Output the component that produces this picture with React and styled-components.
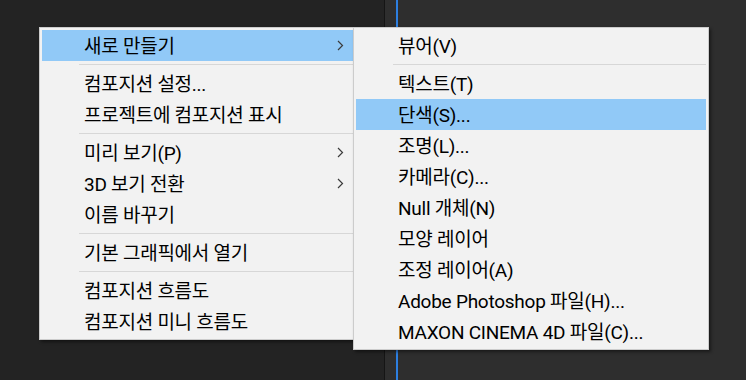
import React from 'react'
import styled, { createGlobalStyle } from 'styled-components'

const GlobalStyle = createGlobalStyle`
  html, body {
    margin: 0;
    padding: 0;
    background: #232323;
  }
  * {
    box-sizing: border-box;
  }
`

const Screen = styled.div`
  position: relative;
  display: flex;
  width: 746px;
  height: 380px;
  overflow: hidden;
  font-family: Roboto, "Noto Sans CJK KR", sans-serif;
`

const LeftPane = styled.div`
  width: 385px;
  background: #232323;
  border-right: 1px solid #151515;
`

const Timeline = styled.div`
  position: relative;
  flex: 1;
  background: #2e2e2e;
`

const Playhead = styled.div`
  position: absolute;
  top: 0;
  bottom: 0;
  left: 11px;
  width: 2px;
  background: #2d7fe0;
`

const Menu = styled.div`
  position: absolute;
  top: 27px;
  left: ${({ left }) => left}px;
  width: ${({ width }) => width}px;
  padding: 2px;
  background: #f2f2f2;
  border: 1px solid #cccccc;
  box-shadow: 2px 2px 3px rgba(0, 0, 0, 0.45);
  display: flex;
  flex-direction: column;
`

const Item = styled.div`
  position: relative;
  height: 31px;
  display: flex;
  align-items: center;
  justify-content: space-between;
  padding: 0 10px 0 42px;
  font-size: 19px;
  letter-spacing: -0.25px;
  color: #000;
  white-space: nowrap;
  background: ${({ active }) => (active ? '#91c9f7' : 'transparent')};
`

const Label = styled.span`
  line-height: 1;
  padding-top: 1px;
`

const Separator = styled.div`
  height: 7px;
  display: flex;
  align-items: center;
  padding-left: 37px;

  &::after {
    content: '';
    flex: 1;
    height: 1px;
    background: #d7d7d7;
  }
`

const Chevron = () => (
  <svg width="7" height="11" viewBox="0 0 7 11" fill="none">
    <polyline points="1,1 5.5,5.5 1,10" stroke="#3c3c3c" strokeWidth="1.2" />
  </svg>
)

const mainItems = [
  { label: '새로 만들기', sub: true, active: true },
  '-',
  { label: '컴포지션 설정...' },
  { label: '프로젝트에 컴포지션 표시' },
  '-',
  { label: '미리 보기(P)', sub: true },
  { label: '3D 보기 전환', sub: true },
  { label: '이름 바꾸기' },
  '-',
  { label: '기본 그래픽에서 열기' },
  '-',
  { label: '컴포지션 흐름도' },
  { label: '컴포지션 미니 흐름도' },
]

const newItems = [
  { label: '뷰어(V)' },
  '-',
  { label: '텍스트(T)' },
  { label: '단색(S)...', active: true },
  { label: '조명(L)...' },
  { label: '카메라(C)...' },
  { label: 'Null 개체(N)' },
  { label: '모양 레이어' },
  { label: '조정 레이어(A)' },
  { label: 'Adobe Photoshop 파일(H)...' },
  { label: 'MAXON CINEMA 4D 파일(C)...' },
]

const MenuList = ({ items, left, width }) => (
  <Menu left={left} width={width}>
    {items.map((it, i) =>
      it === '-' ? (
        <Separator key={i} />
      ) : (
        <Item key={i} active={it.active}>
          <Label>{it.label}</Label>
          {it.sub && <Chevron />}
        </Item>
      )
    )}
  </Menu>
)

export default function App() {
  return (
    <>
      <GlobalStyle />
      <Screen>
        <LeftPane />
        <Timeline>
          <Playhead />
        </Timeline>
        <MenuList items={mainItems} left={39} width={318} />
        <MenuList items={newItems} left={353} width={356} />
      </Screen>
    </>
  )
}
